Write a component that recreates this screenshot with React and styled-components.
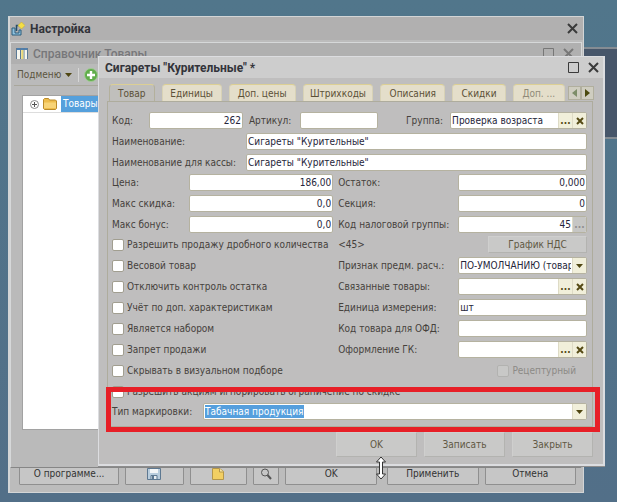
import React from "react";
import styled, { createGlobalStyle } from "styled-components";

const GlobalStyle = createGlobalStyle`
  * {
    box-sizing: border-box;
  }
  body {
    margin: 0;
    background: #52748a;
  }
  body, button, input, select {
    font-family: "DejaVu Sans Condensed", Roboto, sans-serif;
    font-size: 10px;
    line-height: 13px;
    color: #45413c;
  }
`;

const Desktop = styled.div`
  position: relative;
  display: flex;
  min-height: 100vh;
  padding: 16px 33px 9px 8px;
  overflow: hidden;
  background: linear-gradient(#51768b, #526f88);
`;

const DesktopBand = styled.div`
  position: absolute;
  top: 47px;
  right: 0;
  width: 40px;
  height: 92px;
  border-top: 2px solid #858c93;
  border-bottom: 2px solid #858c93;
  background: #47566a;
`;

const MainWindow = styled.div`
  position: relative;
  flex: 1;
  display: flex;
  flex-flow: column;
  border: 1px solid #d3d5d6;
  border-left-width: 2px;
  background: #bcbcbc;
`;

const TitleBar = styled.div`
  display: flex;
  align-items: center;
  height: ${(props) => props.$height};
  padding: ${(props) => props.$padding};
  gap: 5px;
  background: ${(props) => props.$bg};
  h1,
  h2 {
    flex: 1;
    margin: 0;
    font-family: Roboto, sans-serif;
    font-size: 12px;
    line-height: 16px;
    font-weight: ${(props) => props.$weight || 700};
    color: ${(props) => props.$color || "#33343a"};
  }
`;

const WindowButton = styled.button`
  display: flex;
  width: 11px;
  height: 11px;
  padding: 0;
  margin-left: ${(props) => (props.$spaced ? "4px" : "0")};
  border: none;
  background: none;
  color: ${(props) => props.$color || "#3a3a3a"};
`;

const MainFooter = styled.div`
  display: flex;
  gap: 6px;
  margin-top: auto;
  padding: 0 7px 7px 9px;
`;

const FooterButton = styled.button`
  display: flex;
  align-items: center;
  justify-content: center;
  flex: ${(props) => props.$grow || 1} 1 0;
  min-width: 0;
  height: 23px;
  padding: 0;
  margin-right: ${(props) => (props.$apart ? "4px" : "0")};
  border: 1px solid #8f8f8f;
  border-radius: 1px;
  background: #c6c6c6;
  color: #333;
  white-space: nowrap;
`;

const ListWindow = styled.div`
  position: absolute;
  top: 25px;
  right: 1px;
  bottom: 24px;
  left: 0;
  display: flex;
  flex-flow: column;
  border: 1px solid #d6d8d9;
  border-bottom-color: #868686;
  background: #bababa;
`;

const Toolbar = styled.div`
  display: flex;
  align-items: center;
  height: 22px;
  margin: 0 3px;
  padding-left: 3px;
  border-bottom: 1px solid #a9a79c;
`;

const MenuButton = styled.button`
  display: flex;
  align-items: center;
  gap: 4px;
  padding: 0;
  border: none;
  background: none;
  color: #5c5540;
`;

const ToolbarLine = styled.span`
  width: 1px;
  height: 14px;
  margin: 0 5px 0 6px;
  background: #d6d6d6;
`;

const Tree = styled.ul`
  flex: 1;
  margin: 9px 11px 37px;
  padding: 0;
  border: 1px solid #a2a2a2;
  background: #fff;
  list-style: none;
`;

const TreeRow = styled.li`
  display: flex;
  align-items: center;
  height: 17px;
  padding-left: 7px;
  border-bottom: 1px solid #ddd;
  svg {
    margin-right: 4px;
  }
  span {
    flex: 1;
    padding-left: 2px;
    background: #55a0dc;
    color: #fff;
    line-height: 16px;
  }
`;

const Dialog = styled.form`
  position: absolute;
  top: 56px;
  right: 12px;
  left: 98px;
  border: 1px solid #dcdde0;
  border-right-width: 2px;
  border-bottom-width: 2px;
  background: #bfbebe;
  box-shadow: 0 1px 0 #8d8d8d;
`;

const TabList = styled.div`
  display: flex;
  gap: 7px;
  margin: 6px 9px 0 10px;
`;

const Tab = styled.button`
  height: 17px;
  padding: 0;
  flex: ${(props) => props.$grow} 1 0;
  min-width: 0;
  border: 1px solid ${(props) => (props.$active ? "#b3b09c" : "#d8d2b6")};
  border-top-color: #dccf94;
  border-bottom: none;
  border-radius: 4px 4px 0 0;
  background: ${(props) => (props.$active ? "#c0bfbc" : "#e4deca")};
  color: ${(props) => (props.$muted ? "#8f8a78" : "#5b5037")};
  white-space: nowrap;
`;

const TabScroll = styled.div`
  display: flex;
  align-self: center;
  margin-left: -4px;
  button {
    display: flex;
    align-items: center;
    justify-content: center;
    width: 13px;
    height: 14px;
    padding: 0;
    border: 1px solid #b1af9e;
    background: #cfcdc0;
  }
`;

const TabPanel = styled.div`
  display: flex;
  flex-flow: column;
  gap: 3px;
  margin: 0 10px 0 8px;
  padding: 10px 5px 6px 4px;
  border: 1px solid #aeac9d;
`;

const Group = styled.div`
  display: flex;
  flex-flow: column;
  gap: 4px;
  min-width: 0;
`;

const Columns = styled.div`
  display: grid;
  grid-template-columns: minmax(0, 8fr) minmax(0, 9fr);
  gap: 5px;
`;

const Row = styled.div`
  display: flex;
  align-items: center;
  height: 17px;
  min-width: 0;
  label,
  output {
    flex: none;
    width: ${(props) => props.$label || "auto"};
    white-space: nowrap;
  }
`;

const HeaderRow = styled(Row)`
  label:nth-of-type(1) {
    width: 37px;
  }
  label:nth-of-type(2) {
    width: 51px;
    margin-left: 6px;
  }
  label:nth-of-type(3) {
    width: 44px;
    margin-left: 28px;
  }
`;

const MarkingRow = styled(Row)`
  position: relative;
  &::after {
    content: "";
    position: absolute;
    inset: -16px -13px -12px -6px;
    border: 5px solid #e71f27;
    pointer-events: none;
  }
`;

const Field = styled.div`
  display: flex;
  flex: ${(props) => props.$grow || 1} 1 0;
  min-width: 0;
  height: 17px;
  border: 1px solid #b5b2a0;
  border-radius: 2px;
  background: #fff;
  overflow: hidden;
  input,
  select {
    flex: 1;
    width: 100%;
    min-width: 0;
    height: 15px;
    padding: 0 1px;
    border: none;
    outline: none;
    appearance: none;
    background: transparent;
    color: #25253a;
    text-align: ${(props) => (props.$right ? "right" : "left")};
  }
`;

const MarkingSelect = styled.div`
  display: flex;
  flex: 1;
  align-items: center;
  select {
    flex: none;
    width: auto;
    height: 13px;
    padding: 0;
    margin-left: 1px;
    background: #559fdd;
    color: #fff;
  }
`;

const FieldButton = styled.button`
  display: flex;
  flex: none;
  align-items: center;
  justify-content: center;
  width: 14px;
  padding: 0;
  border: none;
  border-left: 1px solid #dedbc6;
  background: ${(props) => (props.disabled ? "#c6c6c4" : "#f1efda")};
  color: ${(props) => (props.disabled ? "#8f8f8f" : "#554a14")};
  font-weight: 700;
`;

const Check = styled.label`
  display: flex;
  align-items: center;
  align-self: ${(props) => (props.$end ? "flex-end" : "auto")};
  gap: 3px;
  height: 17px;
  margin-right: ${(props) => (props.$end ? "11px" : "0")};
  white-space: nowrap;
  color: ${(props) => (props.$end ? "#8c8a86" : "inherit")};
  input {
    flex: none;
    width: 12px;
    height: 12px;
    margin: 0;
    border: 1px solid #a19e90;
    border-radius: 2px;
    appearance: none;
    background: #fff;
  }
  input:disabled {
    border-color: #b2b2b0;
    background: #c8c8c7;
  }
`;

const FlatButton = styled.button`
  width: ${(props) => props.$width};
  height: ${(props) => props.$height};
  padding: 0;
  border: 1px solid #cfcfce;
  border-right-color: #b3b3b0;
  border-bottom-color: #b3b3b0;
  background: #c9c9c8;
  color: #5f5843;
`;

const DialogFooter = styled.div`
  display: flex;
  justify-content: flex-end;
  gap: 7px;
  padding: 5px 10px 7px;
`;

const ResizeCursor = styled.svg`
  position: absolute;
  top: 456px;
  left: 375px;
`;

const CloseIcon = () => (
  <svg width="11" height="11" viewBox="0 0 11 11" stroke="currentColor" strokeWidth="2">
    <path d="M1 1l9 9M10 1l-9 9" />
  </svg>
);

const MaxIcon = () => (
  <svg width="11" height="11" viewBox="0 0 11 11" fill="none" stroke="currentColor">
    <path d="M.5 .5h10v10H.5z" />
  </svg>
);

const DownArrow = () => (
  <svg width="7" height="4" viewBox="0 0 7 4">
    <path d="M0 0h7L3.500 4z" fill="#4f4611" />
  </svg>
);

const SettingsIcon = () => (
  <svg width="14" height="14" viewBox="0 0 14 14">
    <path d="M1 6h3v5h4V8h2v5H1z" fill="#8fc1dd" stroke="#2b5c7c" />
    <path d="M5.500 9V3.500h2" fill="none" stroke="#234d6b" strokeWidth="1.500" />
    <path d="M10.500 0l3.500 3.500L10.500 7 7 3.500z" fill="#f4de45" stroke="#c7a727" strokeWidth=".5" />
  </svg>
);

const CatalogIcon = () => (
  <svg width="12" height="11" viewBox="0 0 12 11">
    <path fill="#f6f6ee" d="M0 0h12v11H0z" />
    <path fill="#4f7fae" d="M0 0h12v2H0z" />
    <path d="M.5 0v11M4.500 0v11M8 0v11M11.500 0v11" stroke="#5b7a96" />
    <path d="M6.300 2v9" stroke="#e8d774" strokeWidth="2" />
  </svg>
);

const AddIcon = () => (
  <svg width="14" height="14" viewBox="0 0 14 14">
    <circle cx="7" cy="7" r="6.500" fill="#61ad4b" stroke="#a2cb95" />
    <path d="M7 3v8M3 7h8" stroke="#fff" strokeWidth="2.400" />
  </svg>
);

const ExpandIcon = () => (
  <svg width="9" height="9" viewBox="0 0 9 9" fill="none" stroke="#8a8a8a">
    <circle cx="4.500" cy="4.500" r="4" />
    <path d="M4.500 2v5M2 4.500h5" stroke="#555" />
  </svg>
);

const FolderIcon = () => (
  <svg width="14" height="12" viewBox="0 0 14 12">
    <path d="M.5 10.500v-9l1-1h4l1 1.500h6l1 1v7.500l-1 1h-11z" fill="#eebd4d" stroke="#b98a2a" />
    <path d="M1 4.500h12v5.500H1z" fill="#f8d477" />
  </svg>
);

const OpenIcon = () => (
  <svg width="14" height="12" viewBox="0 0 14 12">
    <path d="M1.500 .5h7l4 3v8h-11z" fill="#f2cf63" stroke="#b5974a" />
    <path d="M8.500 .5v3.500h4" fill="#f9e7a5" stroke="#b5974a" />
  </svg>
);

const SaveIcon = () => (
  <svg width="14" height="12" viewBox="0 0 14 12">
    <path d="M.5 .5h13v11H.5z" fill="#b9cddd" stroke="#5d7891" />
    <path d="M3 1h8v4H3z" fill="#f4f6f7" />
    <path d="M4 7.500h6v4H4z" fill="#e9eef1" stroke="#5d7891" />
    <path d="M5 8h2v3H5z" fill="#5d7891" />
  </svg>
);

const SearchIcon = () => (
  <svg width="12" height="12" viewBox="0 0 12 12" fill="none" stroke="#555">
    <circle cx="5" cy="4.500" r="3.500" />
    <path d="M7.500 7l3.500 4" strokeWidth="2" />
  </svg>
);

const TextField = ({ id, label, value = "", right, children }) => (
  <>
    <label htmlFor={id}>{label}</label>
    <Field $right={right}>
      <input id={id} defaultValue={value} />
      {children}
    </Field>
  </>
);

const PickButtons = () => (
  <>
    <FieldButton type="button" aria-label="Выбрать">...</FieldButton>
    <FieldButton type="button" aria-label="Очистить">
      <svg width="8" height="8" viewBox="0 0 8 8" stroke="currentColor" strokeWidth="2">
        <path d="M1 1l6 6M7 1l-6 6" />
      </svg>
    </FieldButton>
  </>
);

const tabs = [
  { title: "Товар", grow: 45 },
  { title: "Единицы", grow: 60 },
  { title: "Доп. цены", grow: 67 },
  { title: "Штрихкоды", grow: 71 },
  { title: "Описания", grow: 65 },
  { title: "Скидки", grow: 53 },
  { title: "Доп. ...", grow: 52, muted: true },
];

const prices = [
  { id: "price", label: "Цена:", value: "186,00" },
  { id: "maxDiscount", label: "Макс скидка:", value: "0,0" },
  { id: "maxBonus", label: "Макс бонус:", value: "0,0" },
];

const flags = [
  "Разрешить продажу дробного количества",
  "Весовой товар",
  "Отключить контроль остатка",
  "Учёт по доп. характеристикам",
  "Является набором",
  "Запрет продажи",
  "Скрывать в визуальном подборе",
  "Разрешить акциям игнорировать ограничение по скидке",
];

const App = () => {
  return (
    <Desktop>
      <GlobalStyle />
      <DesktopBand />
      <MainWindow>
        <TitleBar $height="23px" $padding="0 5px 0 1px" $bg="#b1b0b0">
          <SettingsIcon />
          <h1>Настройка</h1>
          <WindowButton aria-label="Закрыть настройку">
            <CloseIcon />
          </WindowButton>
        </TitleBar>
        <MainFooter>
          <FooterButton $grow={101}>О программе...</FooterButton>
          <FooterButton $grow={58} aria-label="Сохранить">
            <SaveIcon />
          </FooterButton>
          <FooterButton $grow={57} aria-label="Открыть">
            <OpenIcon />
          </FooterButton>
          <FooterButton $grow={25} aria-label="Найти">
            <SearchIcon />
          </FooterButton>
          <FooterButton $grow={92} $apart>
            OK
          </FooterButton>
          <FooterButton $grow={92}>Применить</FooterButton>
          <FooterButton $grow={92}>Отмена</FooterButton>
        </MainFooter>
        <ListWindow>
          <TitleBar
            $height="21px"
            $padding="0 7px 0 5px"
            $bg="#b0b0b0"
            $color="#77777a"
            $weight={500}
          >
            <CatalogIcon />
            <h2>Справочник Товары</h2>
            <WindowButton $color="#777" aria-label="Развернуть справочник">
              <MaxIcon />
            </WindowButton>
            <WindowButton $spaced $color="#777" aria-label="Закрыть справочник">
              <CloseIcon />
            </WindowButton>
          </TitleBar>
          <Toolbar>
            <MenuButton>
              Подменю <DownArrow />
            </MenuButton>
            <ToolbarLine />
            <MenuButton aria-label="Добавить">
              <AddIcon />
            </MenuButton>
          </Toolbar>
          <Tree>
            <TreeRow>
              <ExpandIcon />
              <FolderIcon />
              <span>Товары</span>
            </TreeRow>
          </Tree>
        </ListWindow>
      </MainWindow>

      <Dialog onSubmit={(e) => e.preventDefault()}>
        <TitleBar $height="21px" $padding="0 4px 0 6px" $bg="#cdcdcd">
          <h2>Сигареты "Курительные" *</h2>
          <WindowButton type="button" aria-label="Развернуть">
            <MaxIcon />
          </WindowButton>
          <WindowButton type="button" $spaced aria-label="Закрыть окно">
            <CloseIcon />
          </WindowButton>
        </TitleBar>
        <TabList role="tablist">
          {tabs.map((tab, i) => (
            <Tab
              key={tab.title}
              type="button"
              role="tab"
              aria-selected={i === 0}
              $active={i === 0}
              $grow={tab.grow}
              $muted={tab.muted}
            >
              {tab.title}
            </Tab>
          ))}
          <TabScroll>
            <button type="button" aria-label="Назад">
              <svg width="5" height="8" viewBox="0 0 5 8">
                <path d="M5 0v8L0 4z" fill="#7d8d68" />
              </svg>
            </button>
            <button type="button" aria-label="Вперёд">
              <svg width="5" height="8" viewBox="0 0 5 8">
                <path d="M0 0v8l5-4z" fill="#4b4a0e" />
              </svg>
            </button>
          </TabScroll>
        </TabList>
        <TabPanel>
          <Group>
            <HeaderRow>
              <label htmlFor="code">Код:</label>
              <Field $grow={94} $right>
                <input id="code" defaultValue="262" />
              </Field>
              <label htmlFor="article">Артикул:</label>
              <Field $grow={78}>
                <input id="article" />
              </Field>
              <label htmlFor="group">Группа:</label>
              <Field $grow={138}>
                <input id="group" defaultValue="Проверка возраста" />
                <PickButtons />
              </Field>
            </HeaderRow>
            <Row $label="134px">
              <TextField id="name" label="Наименование:" value={'Сигареты "Курительные"'} />
            </Row>
            <Row $label="134px">
              <TextField
                id="cashName"
                label="Наименование для кассы:"
                value={'Сигареты "Курительные"'}
              />
            </Row>
          </Group>
          <Columns>
            <Group>
              {prices.map((item) => (
                <Row key={item.id} $label="77px">
                  <TextField {...item} right />
                </Row>
              ))}
            </Group>
            <Group>
              <Row $label="120px">
                <TextField id="rest" label="Остаток:" value="0,000" right />
              </Row>
              <Row $label="120px">
                <TextField id="section" label="Секция:" value="0" right />
              </Row>
              <Row $label="120px">
                <TextField id="tax" label="Код налоговой группы:" value="45" right>
                  <FieldButton type="button" disabled aria-label="Выбрать группу">
                    ...
                  </FieldButton>
                </TextField>
              </Row>
            </Group>
          </Columns>
          <Columns>
            <Group>
              {flags.map((flag) => (
                <Check key={flag}>
                  <input type="checkbox" />
                  {flag}
                </Check>
              ))}
            </Group>
            <Group>
              <Row $label="150px">
                <output>&lt;45&gt;</output>
                <FlatButton type="button" $width="100%" $height="17px">
                  График НДС
                </FlatButton>
              </Row>
              <Row $label="120px">
                <label htmlFor="subject">Признак предм. расч.:</label>
                <Field>
                  <select id="subject">
                    <option>ПО-УМОЛЧАНИЮ (товар)</option>
                  </select>
                  <FieldButton type="button" aria-label="Открыть список">
                    <DownArrow />
                  </FieldButton>
                </Field>
              </Row>
              <Row $label="120px">
                <TextField id="linked" label="Связанные товары:">
                  <PickButtons />
                </TextField>
              </Row>
              <Row $label="120px">
                <TextField id="unit" label="Единица измерения:" value="шт" />
              </Row>
              <Row $label="120px">
                <TextField id="ofd" label="Код товара для ОФД:" />
              </Row>
              <Row $label="120px">
                <TextField id="gk" label="Оформление ГК:">
                  <PickButtons />
                </TextField>
              </Row>
              <Check $end>
                <input type="checkbox" disabled />
                Рецептурный
              </Check>
            </Group>
          </Columns>
          <MarkingRow $label="91px">
            <label htmlFor="marking">Тип маркировки:</label>
            <Field>
              <MarkingSelect>
                <select id="marking">
                  <option>Табачная продукция</option>
                </select>
              </MarkingSelect>
              <FieldButton type="button" aria-label="Открыть типы">
                <DownArrow />
              </FieldButton>
            </Field>
          </MarkingRow>
        </TabPanel>
        <DialogFooter>
          <FlatButton type="submit" $width="81px" $height="25px">OK</FlatButton>
          <FlatButton type="button" $width="81px" $height="25px">Записать</FlatButton>
          <FlatButton type="button" $width="81px" $height="25px">Закрыть</FlatButton>
        </DialogFooter>
      </Dialog>

      <ResizeCursor width="12" height="24" viewBox="0 0 12 24">
        <path
          d="M6 1l4.500 5H7.500v12h3L6 23l-4.500-5h3V6h-3z"
          fill="#fff"
          stroke="#333"
        />
      </ResizeCursor>
    </Desktop>
  );
};

export default App;
